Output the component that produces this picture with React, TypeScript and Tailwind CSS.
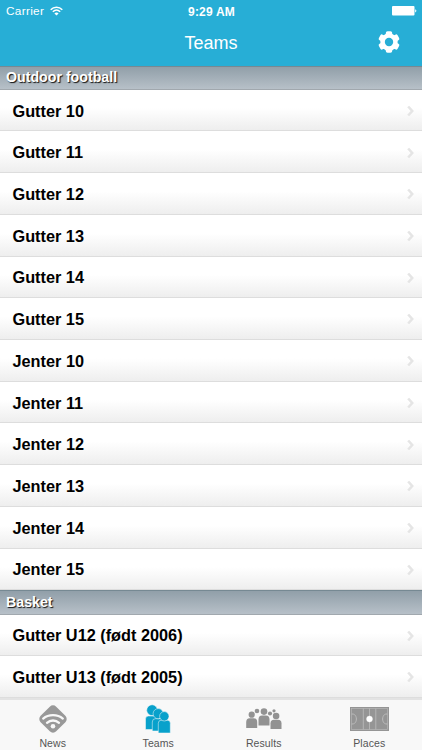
type Section = {
  title: string;
  teams: string[];
};

const sections: Section[] = [
  {
    title: "Outdoor football",
    teams: [
      "Gutter 10",
      "Gutter 11",
      "Gutter 12",
      "Gutter 13",
      "Gutter 14",
      "Gutter 15",
      "Jenter 10",
      "Jenter 11",
      "Jenter 12",
      "Jenter 13",
      "Jenter 14",
      "Jenter 15",
    ],
  },
  {
    title: "Basket",
    teams: ["Gutter U12 (født 2006)", "Gutter U13 (født 2005)"],
  },
];

function WifiIcon() {
  return (
    <svg width="13" height="10" viewBox="0 0 13 10" fill="none" stroke="white" className="mb-[2px]">
      <path d="M.7 3.7C4 .4 9 .4 12.3 3.7" strokeWidth="1.6" />
      <path d="M2.8 5.8C5 3.7 8 3.7 10.2 5.8" strokeWidth="1.5" />
      <path d="M6.5 9.6L4.4 7.5C5.6 6.3 7.4 6.3 8.6 7.5Z" fill="white" stroke="none" />
    </svg>
  );
}

function BatteryIcon() {
  return (
    <svg width="25" height="10" viewBox="0 0 25 10" fill="white">
      <rect x="0" y="0" width="22.5" height="9.6" rx="1" />
      <path d="M23.2 3.2C24.8 3.8 24.8 5.8 23.2 6.4Z" />
    </svg>
  );
}

function GearIcon() {
  return (
    <svg width="22" height="22" viewBox="-11 -11 22 22">
      <g fill="white">
        <circle r="8.7" />
        {[0, 60, 120].map((angle) => (
          <rect key={angle} x="-3.2" y="-10.8" width="6.4" height="21.6" rx="1.7" transform={`rotate(${angle})`} />
        ))}
      </g>
      <circle r="4.2" fill="#27aed6" />
    </svg>
  );
}

function NewsIcon() {
  return (
    <svg width="30" height="30" viewBox="0 0 30 30" fill="none">
      <rect x="4" y="4" width="22" height="22" rx="4.5" fill="#999" transform="rotate(45 15 15)" />
      <g stroke="#f8f8f8" strokeWidth="2.3" strokeLinecap="round">
        <path d="M5.2 14.6C10.5 10 19.5 10 24.8 14.6" />
        <path d="M9 18.8C12.4 15.7 17.6 15.7 21 18.8" />
      </g>
      <circle cx="15" cy="22.2" r="2.3" fill="#f8f8f8" />
    </svg>
  );
}

function TeamsIcon() {
  return (
    <svg width="26" height="30" viewBox="0 0 26 30" fill="#08a1cb" stroke="#f8f8f8" strokeWidth="0.5">
      <path d="M.5 25.5V15Q.5 12 3.5 12H10Q13 12 13 15V25.5Z" />
      <circle cx="7.1" cy="6.2" r="5.4" />
      <path d="M7.3 27V18Q7.3 14.7 10.3 14.7H16Q19 14.7 19 18V27Z" />
      <circle cx="13.2" cy="9.7" r="5.1" />
      <path d="M13.3 29V19.2Q13.3 16.2 16.3 16.2H22.3Q25.3 16.2 25.3 19.2V29Z" />
      <circle cx="19.3" cy="12.3" r="4.7" />
    </svg>
  );
}

function ResultsIcon() {
  return (
    <svg width="36" height="22" viewBox="0 0 36 22" fill="#929292">
      <circle cx="11" cy="3" r="2.3" />
      <circle cx="24" cy="5.5" r="2.1" />
      <circle cx="28" cy="2.8" r="1.6" />
      <circle cx="18" cy="3.6" r="3.3" />
      <path d="M12.5 17.5V11.5Q12.5 7.5 16 7.5H20Q23.5 7.5 23.5 11.5V17.5Z" />
      <circle cx="5.7" cy="6.7" r="3.1" />
      <path d="M.2 20V14Q.2 10.2 3.7 10.2H7.7Q11.2 10.2 11.2 14V20Z" />
      <circle cx="30.1" cy="8" r="3.3" />
      <path d="M24.5 21V15.3Q24.5 11.7 28 11.7H32Q35.5 11.7 35.5 15.3V21Z" />
    </svg>
  );
}

function PlacesIcon() {
  return (
    <svg width="39" height="24" viewBox="0 0 39 24" fill="none" stroke="#bcbcbc">
      <rect width="39" height="24" fill="#959595" stroke="none" />
      <rect x="1.5" y="1.5" width="36" height="21" strokeWidth="0.6" />
      <path d="M13.3 1.5V22.5M19.5 1.5V22.5M25.8 1.5V22.5" strokeWidth="0.8" />
      <path d="M1.5 7C8 6 8 18 1.5 17M37.5 7C31 6 31 18 37.5 17" strokeWidth="1" />
      <circle cx="19.5" cy="12" r="3" fill="white" stroke="white" strokeWidth="0.3" />
    </svg>
  );
}

const tabs = [
  { label: "News", icon: <NewsIcon /> },
  { label: "Teams", icon: <TeamsIcon /> },
  { label: "Results", icon: <ResultsIcon /> },
  { label: "Places", icon: <PlacesIcon /> },
];

function TeamRow({ name }: { name: string }) {
  return (
    <li className="flex h-[41.73px] shrink-0 items-center justify-between border-b border-[#dddddd] bg-linear-to-b from-white from-45% to-[#eeeeee] pt-[1.5px] pr-[7px] pl-[12.5px]">
      <span className="text-[16.3px] font-bold text-black">{name}</span>
      <svg width="9" height="12" viewBox="0 0 9 12" fill="none">
        <path d="M2.2 1.5L6.2 6L2.2 10.5" stroke="#e5e5e5" strokeWidth="2.6" />
      </svg>
    </li>
  );
}

export default function App() {
  return (
    <div className="flex h-[750px] w-[422px] flex-col overflow-hidden bg-white font-['Liberation_Sans',Arial,sans-serif]">
      <header className="h-[65.5px] shrink-0 bg-[#27aed6] text-white">
        <div className="grid h-[22px] grid-cols-3 items-center pr-[5px] pl-[6px]">
          <div className="flex items-center gap-[6px] pt-px text-[11.8px] tracking-[0.3px]">
            Carrier
            <WifiIcon />
          </div>
          <span className="pt-px text-center text-[12px] font-bold tracking-[0.2px]">9:29 AM</span>
          <div className="flex justify-end">
            <BatteryIcon />
          </div>
        </div>
        <div className="grid h-[42px] grid-cols-3 items-center px-[22px]">
          <h1 className="col-start-2 text-center text-[18px]">Teams</h1>
          <button className="flex justify-end pb-[2px]" aria-label="Settings">
            <GearIcon />
          </button>
        </div>
      </header>

      <main className="flex min-h-0 flex-1 flex-col overflow-hidden">
        {sections.map((section) => (
          <section key={section.title} className="shrink-0">
            <h2 className="flex h-[24.2px] items-center border-t border-b border-t-[#768993] border-b-[#a1a8ae] bg-linear-to-b from-[#919fa9] to-[#b7c0c8] pl-[6px] text-[14.2px] font-bold text-white [text-shadow:1px_1px_1px_#111]">
              {section.title}
            </h2>
            <ul>
              {section.teams.map((team) => (
                <TeamRow key={team} name={team} />
              ))}
            </ul>
          </section>
        ))}
      </main>

      <nav className="grid h-[52px] shrink-0 grid-cols-4 border-t-2 border-[#e3e3e3] bg-[#f8f8f8]">
        {tabs.map((tab) => (
          <div key={tab.label} className="flex flex-col items-center">
            <div className="flex h-[37px] items-center justify-center">{tab.icon}</div>
            <span className="text-[10.5px] leading-[12px] tracking-[0.1px] text-[#555]">{tab.label}</span>
          </div>
        ))}
      </nav>
    </div>
  );
}
